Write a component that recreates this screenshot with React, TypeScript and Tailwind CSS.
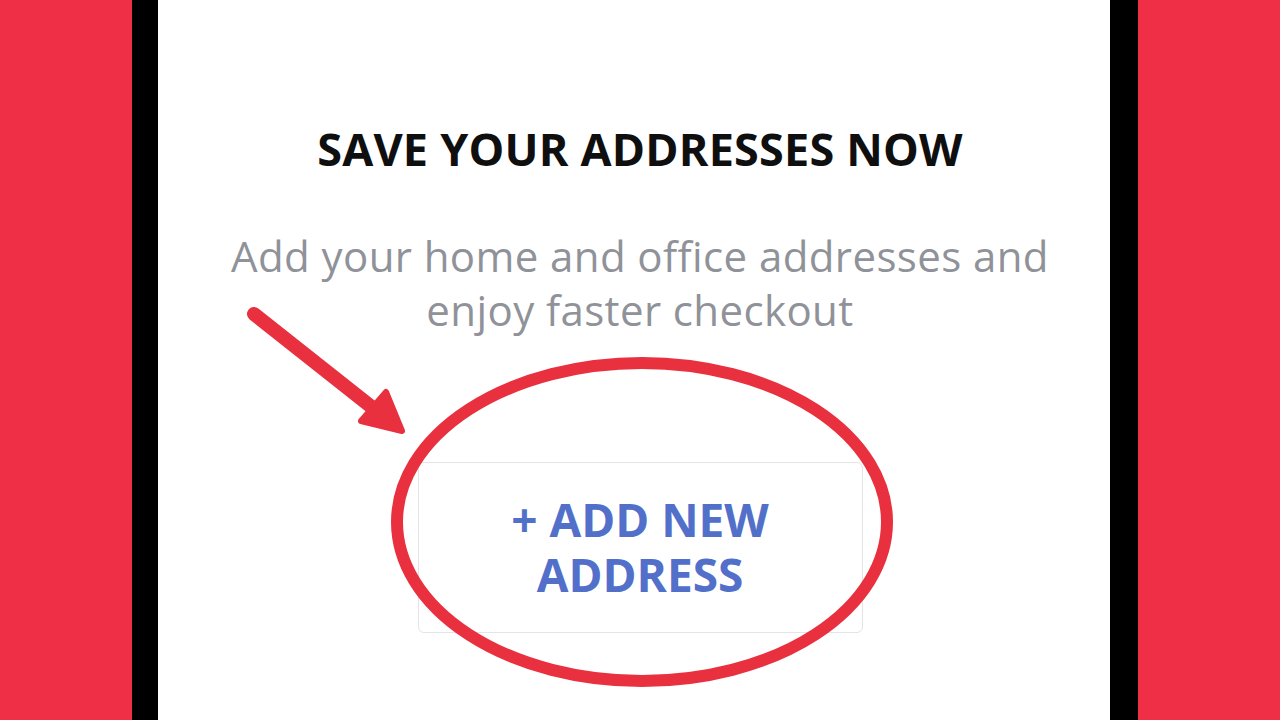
export default function App() {
  return (
    <div className="relative flex h-[720px] w-[1280px] overflow-hidden" style={{ fontFamily: '"Open Sans", "Noto Sans", sans-serif' }}>
      <div className="w-[132px] shrink-0 bg-[#ee2f45]" />
      <div className="w-[26px] shrink-0 bg-black" />
      <div className="flex flex-1 flex-col items-center bg-white pl-[12px] pt-[122px]">
        <h1 className="text-[45px] font-bold leading-[54px] tracking-[0.2px] text-[#0f0f0f]">SAVE YOUR ADDRESSES NOW</h1>
        <p className="mt-[53px] w-[880px] text-center text-[42px] font-normal leading-[54px] tracking-[0.4px] text-[#8f9298]">
          Add your home and office addresses and enjoy faster checkout
        </p>
        <button className="mt-[125px] flex h-[171px] w-[445px] flex-col items-center justify-center rounded-md border border-[#e4e4e7] bg-white pb-[2px] text-[46px] font-bold leading-[55px] text-[#5270c9]">
          <span>+ ADD NEW</span>
          <span>ADDRESS</span>
        </button>
      </div>
      <div className="w-[28px] shrink-0 bg-black" />
      <div className="w-[142px] shrink-0 bg-[#ee2f45]" />

      <svg className="pointer-events-none absolute inset-0" width="1280" height="720" viewBox="0 0 1280 720">
        <ellipse cx="642" cy="522" rx="245" ry="159" fill="none" stroke="#e9303f" strokeWidth="12" />
        <line x1="254" y1="314" x2="388" y2="420" stroke="#e9303f" strokeWidth="14" strokeLinecap="round" />
        <polygon points="402,431 361,421 386,392" fill="#e9303f" stroke="#e9303f" strokeWidth="6" strokeLinejoin="round" />
      </svg>
    </div>
  );
}
